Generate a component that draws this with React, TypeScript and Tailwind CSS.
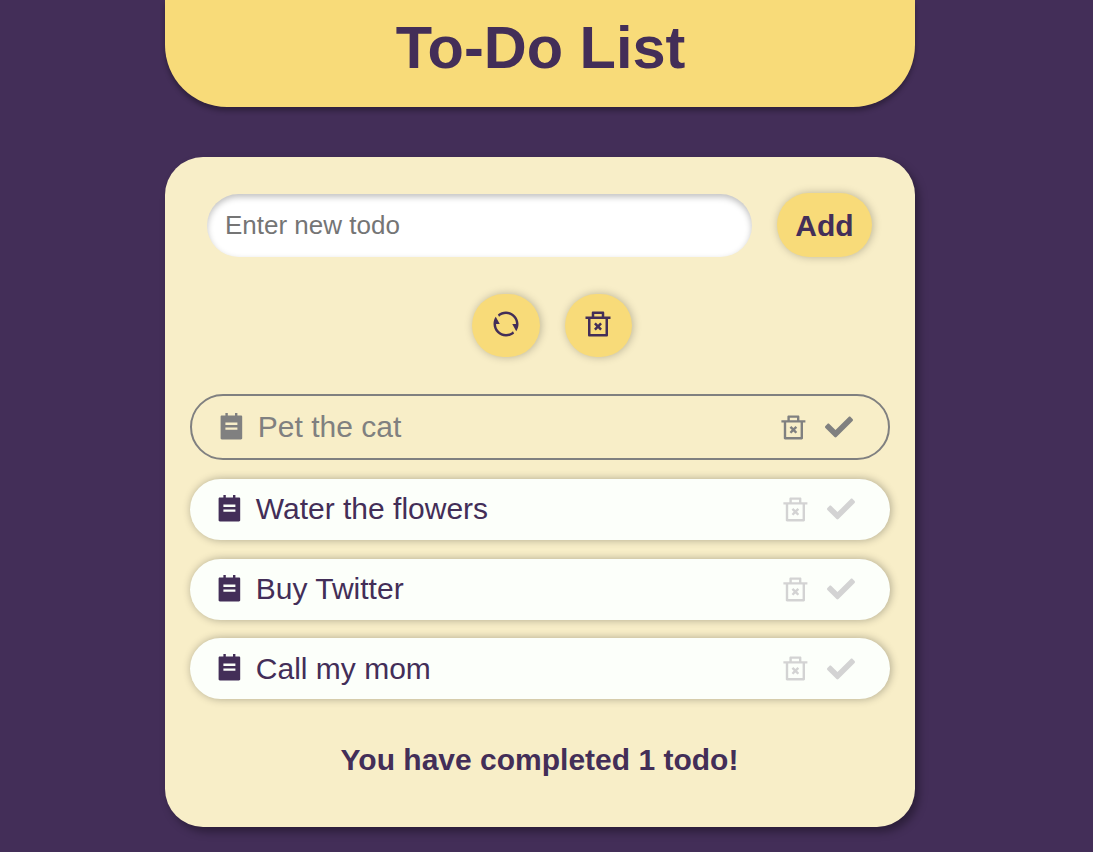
import { RiDeleteBin2Line, RiRefreshLine, RiTodoFill } from "react-icons/ri";
import { FaCheck } from "react-icons/fa";

type Todo = { text: string; done: boolean };

const todos: Todo[] = [
  { text: "Pet the cat", done: true },
  { text: "Water the flowers", done: false },
  { text: "Buy Twitter", done: false },
  { text: "Call my mom", done: false },
];

const buttonStyle =
  "flex h-[63.5px] items-center justify-center rounded-[32px] bg-[#f8db79] text-[#432e58] shadow-[1px_0px_8px_rgba(0,0,0,0.25)]";

function TodoRow({ todo }: { todo: Todo }) {
  const look = todo.done
    ? "mb-[18.8px] h-[66px] rounded-[33px] border-2 border-[#808080] pl-[25px] pr-[35px] text-[#808080]"
    : "mb-[18.8px] h-[61px] rounded-[31px] bg-[#fcfffa] pl-[25px] pr-[35px] text-[#432e58] shadow-[1px_0px_8px_rgba(0,0,0,0.3)]";
  return (
    <li className={`flex items-center ${look}`}>
      <RiTodoFill className="size-[28.8px] shrink-0" />
      <span className="ml-[12px] grow text-[30px] leading-none">{todo.text}</span>
      <div className={`flex items-center gap-[17.5px] ${todo.done ? "" : "text-[#d3d3d3]"}`}>
        <RiDeleteBin2Line className="size-[28.8px]" />
        <FaCheck className="size-7" />
      </div>
    </li>
  );
}

export default function App() {
  return (
    <div className="h-[852px] overflow-hidden bg-[#432e58] pl-[165px] font-['Liberation_Sans',Arial,sans-serif] text-[#432e58]">
      <header className="flex h-[107px] w-[750px] justify-center rounded-b-[62px] bg-[#f8db79] pt-[14px] shadow-[0_4px_5px_rgba(0,0,0,0.3)]">
        <h1 className="pl-px text-[59.5px] leading-[68px] font-bold">To-Do List</h1>
      </header>
      <main className="mt-[50px] h-[670px] w-[750px] rounded-[38px] bg-[#f8eec8] px-[25px] pt-9 shadow-[4px_5px_8px_rgba(0,0,0,0.35)]">
        <form className="flex h-16 items-start pl-[17px]">
          <input
            className="mt-px h-[63px] w-[545px] rounded-[32px] bg-white px-[18px] text-[26px] shadow-[inset_0_3px_6px_rgba(0,0,0,0.25)] outline-none placeholder:text-[#757575]"
            placeholder="Enter new todo"
          />
          <button type="button" className={`ml-[25px] mt-[0.4px] w-[95px] text-[30px] font-bold ${buttonStyle}`}>
            Add
          </button>
        </form>
        <div className="mt-[36.5px] flex gap-[25px] pl-[282px]">
          <button type="button" aria-label="Reset" className={`w-[68px] ${buttonStyle}`}>
            <RiRefreshLine className="mb-0.5 size-[30px]" />
          </button>
          <button type="button" aria-label="Delete all" className={`w-[67px] ${buttonStyle}`}>
            <RiDeleteBin2Line className="mr-px mb-0.5 size-[30px]" />
          </button>
        </div>
        <ul className="mt-[37px]">
          {todos.map((todo) => (
            <TodoRow key={todo.text} todo={todo} />
          ))}
        </ul>
        <p className="mt-[42.2px] pr-px text-center text-[30px] leading-9 font-bold">You have completed 1 todo!</p>
      </main>
    </div>
  );
}
